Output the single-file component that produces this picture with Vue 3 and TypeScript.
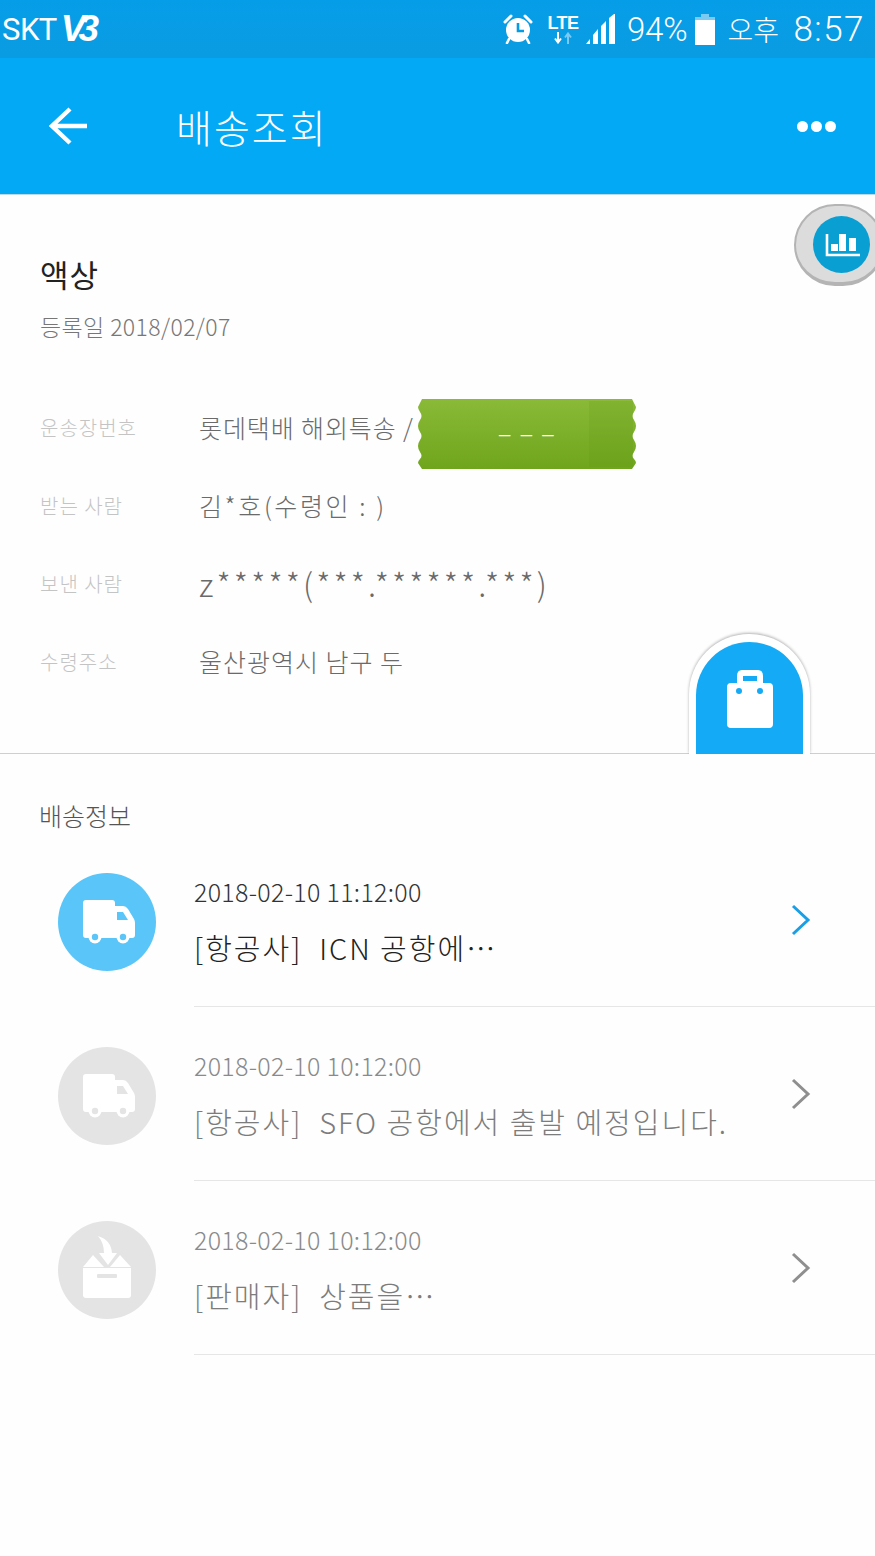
<script setup lang="ts">
interface Field {
  label: string
  value: string
  spacing: number
  size: number
}

interface Step {
  time: string
  text: string
  icon: 'truck' | 'box'
  active: boolean
}

const fields: Field[] = [
  { label: '운송장번호', value: '롯데택배 해외특송 /', spacing: 0.9, size: 25 },
  { label: '받는 사람', value: '김*호(수령인 : )', spacing: 2.6, size: 25 },
  { label: '보낸 사람', value: 'z*****(***.******.***)', spacing: 3.1, size: 32 },
  { label: '수령주소', value: '울산광역시 남구 두', spacing: 1, size: 25 },
]

const steps: Step[] = [
  { time: '2018-02-10 11:12:00', text: '[항공사]  ICN 공항에…', icon: 'truck', active: true },
  { time: '2018-02-10 10:12:00', text: '[항공사]  SFO 공항에서 출발 예정입니다.', icon: 'truck', active: false },
  { time: '2018-02-10 10:12:00', text: '[판매자]  상품을…', icon: 'box', active: false },
]
</script>

<template>
  <div class="page">
    <div class="status">
      <div class="carrier">
        <span>SKT</span>
        <span class="carrier-logo">V3</span>
      </div>
      <div class="status-right">
        <svg class="alarm" width="30" height="30" viewBox="0 0 30 30">
          <path d="M2 8 L8 2 M28 8 L22 2" stroke="#fff" stroke-width="3" stroke-linecap="round" />
          <circle cx="15" cy="16" r="12" fill="#fff" />
          <path d="M15 9 V17 H21" fill="none" stroke="#059ce6" stroke-width="2.6" />
          <path d="M6 25 L4 29 M24 25 L26 29" stroke="#fff" stroke-width="2.6" stroke-linecap="round" />
        </svg>
        <div class="lte">
          <span>LTE</span>
          <svg width="26" height="12" viewBox="0 0 26 12">
            <path d="M8 0 V9 M5 6.5 L8 10.5 L11 6.5" fill="none" stroke="#fff" stroke-width="2" />
            <path d="M18 12 V3 M15 5.5 L18 1.5 L21 5.5" fill="none" stroke="#7cc9f2" stroke-width="2" />
          </svg>
        </div>
        <svg class="signal" width="30" height="30" viewBox="0 0 30 30">
          <path d="M0 30 L4 25 V30 Z M7 30 V21 L12 15 V30 Z M15 30 V12 L20 7 V30 Z M23 30 V4 L28 0 H29 V30 Z" fill="#fff" />
        </svg>
        <span class="batt-text">94%</span>
        <svg class="battery" width="20" height="31" viewBox="0 0 20 31">
          <rect x="6" y="0" width="8" height="3" fill="#7cc9f2" />
          <rect x="0" y="3" width="20" height="3" fill="#7cc9f2" />
          <rect x="0" y="6" width="20" height="25" fill="#fff" />
        </svg>
        <span class="clock-ampm">오후</span>
        <span class="clock">8:57</span>
      </div>
    </div>

    <header class="bar">
      <svg class="back" width="40" height="40" viewBox="0 0 40 40">
        <path d="M38 20 H4 M21 3 L3 20 L21 37" fill="none" stroke="#fff" stroke-width="4.4" />
      </svg>
      <h1 class="bar-title">배송조회</h1>
      <div class="dots"><i></i><i></i><i></i></div>
    </header>

    <section class="info">
      <h2 class="product">액상</h2>
      <p class="reg">등록일 2018/02/07</p>
      <div class="fields">
        <div v-for="(f, i) in fields" :key="i" class="field">
          <span class="field-label">{{ f.label }}</span>
          <span class="field-value" :style="{ letterSpacing: f.spacing + 'px', fontSize: f.size + 'px' }">{{ f.value }}</span>
          <div v-if="i === 0" class="tag">
            <svg class="tag-bg" width="218" height="70" viewBox="0 0 218 70">
              <defs>
                <linearGradient id="tagFill" x1="0" y1="0" x2="0" y2="1">
                  <stop offset="0" stop-color="#8aba38" />
                  <stop offset="1" stop-color="#6fa51c" />
                </linearGradient>
              </defs>
              <path
                d="M4 0 H214 L218 8 Q218 10 216 13 Q213 17 216 21 Q218 24 218 27 Q218 30 216 33 Q213 37 216 41 Q218 44 218 47 Q218 50 216 53 Q213 57 216 60 Q218 62 218 64 L214 70 H4 L0 64 Q0 62 2 60 Q5 57 2 53 Q0 50 0 47 Q0 44 2 41 Q5 37 2 33 Q0 30 0 27 Q0 24 2 21 Q5 17 2 13 Q0 10 0 8 Z"
                fill="url(#tagFill)"
              />
              <rect x="171" y="2" width="44" height="66" fill="#5f9416" opacity="0.18" />
            </svg>
            <span class="tag-text">– – –</span>
          </div>
        </div>
      </div>
    </section>

    <section class="delivery">
      <h3 class="delivery-title">배송정보</h3>
      <div v-for="(s, i) in steps" :key="i" class="step" :class="{ on: s.active }">
        <div class="step-icon">
          <svg v-if="s.icon === 'truck'" width="98" height="98" viewBox="0 0 98 98">
            <path
              d="M28 27 H54 Q57 27 57 30 V33 H65 Q68 33 70 36 L76 46 Q77 48 77 50 V62 Q77 65 74 65 H28 Q25 65 25 62 V30 Q25 27 28 27 Z"
              fill="#fff"
            />
            <path d="M59 39 H65 L70 47 H59 Z" class="cut" />
            <circle cx="37" cy="64" r="6.5" fill="#fff" />
            <circle cx="37" cy="64" r="3.2" class="cut" />
            <circle cx="65" cy="64" r="6.5" fill="#fff" />
            <circle cx="65" cy="64" r="3.2" class="cut" />
          </svg>
          <svg v-else width="98" height="98" viewBox="0 0 98 98">
            <path d="M25 46 L35 34 L46 46 Z M73 46 L62 34 L52 46 Z" fill="#fff" />
            <path d="M25 47 H73 V74 Q73 77 70 77 H28 Q25 77 25 74 Z" fill="#fff" />
            <path d="M35 32 L63 32 L49 47 Z" class="cut" />
            <path d="M40 15 Q53 19 54 32 H59 L50 44 L41 32 H46 Q46 22 40 15 Z" fill="#fff" />
            <rect x="39" y="53" width="20" height="4" rx="1" class="cut" />
          </svg>
        </div>
        <div class="step-body">
          <div class="step-text">
            <div class="step-time">{{ s.time }}</div>
            <div class="step-msg">{{ s.text }}</div>
          </div>
          <svg class="chev" width="20" height="32" viewBox="0 0 20 32">
            <path d="M2 2 L17 16 L2 30" fill="none" stroke="currentColor" stroke-width="3" />
          </svg>
        </div>
      </div>
    </section>

    <!-- floating bits over the content -->
    <div class="pill">
      <div class="pill-dot">
        <svg width="36" height="30" viewBox="0 0 36 30">
          <path d="M3 4 V25 H36" fill="none" stroke="#fff" stroke-width="2.6" />
          <rect x="7" y="14" width="7" height="7" fill="#fff" />
          <rect x="15" y="4" width="7" height="17" fill="#fff" />
          <rect x="25" y="8" width="7" height="13" fill="#fff" />
        </svg>
      </div>
    </div>
    <div class="bag-tab">
      <div class="bag-inner">
        <svg width="48" height="60" viewBox="0 0 48 60">
          <path
            d="M16 0 H32 Q37 0 37 6 V13 H43 Q47 13 47 17 V54 Q47 58 43 58 H5 Q1 58 1 54 V17 Q1 13 5 13 H11 V6 Q11 0 16 0 Z"
            fill="#fff"
          />
          <rect x="17" y="6" width="14" height="5" fill="#14aaf5" />
          <circle cx="13" cy="21" r="3" fill="#14aaf5" />
          <circle cx="34" cy="21" r="3" fill="#14aaf5" />
        </svg>
      </div>
    </div>
  </div>
</template>

<style scoped>
.page {
  position: relative;
  width: 875px;
  min-height: 1556px;
  overflow: hidden;
  background: #fefefe;
  font-family: "Noto Sans CJK KR", "Noto Sans", sans-serif;
  font-weight: 300;
  color: #666;
}

.status {
  height: 58px;
  display: flex;
  align-items: center;
  justify-content: space-between;
  padding: 0 10px 0 2px;
  box-sizing: border-box;
  background: linear-gradient(#069de8, #0a9ce2);
  color: #fff;
}

.carrier {
  display: flex;
  align-items: center;
  font-family: Roboto, sans-serif;
  font-weight: 400;
  font-size: 31px;
  letter-spacing: -0.5px;
}

.carrier-logo {
  font-family: "Liberation Sans", sans-serif;
  font-weight: 700;
  font-style: italic;
  font-size: 37px;
  letter-spacing: -7px;
  margin-left: 4px;
}

.status-right {
  display: flex;
  align-items: center;
}

.lte {
  display: flex;
  flex-direction: column;
  align-items: center;
  margin-left: 14px;
  width: 32px;
}

.lte span {
  font-family: "Liberation Sans", sans-serif;
  font-weight: 700;
  font-size: 18px;
  line-height: 18px;
  letter-spacing: -0.5px;
}

.signal {
  margin-left: 7px;
}

.batt-text {
  margin-left: 11px;
  font-family: Roboto, sans-serif;
  font-weight: 300;
  font-size: 33px;
  letter-spacing: -0.2px;
}

.battery {
  margin-left: 8px;
}

.clock-ampm {
  margin-left: 12px;
  font-size: 28px;
  width: 54px;
}

.clock {
  margin-left: 12px;
  font-family: Roboto, sans-serif;
  font-weight: 300;
  font-size: 35px;
  letter-spacing: 1.5px;
}

.bar {
  height: 136px;
  display: flex;
  align-items: center;
  padding: 0 39px 0 49px;
  background: #04a9f5;
  border-bottom: 1px solid #bcd9e6;
}

.back {
  flex: none;
}

.bar-title {
  margin: 0 0 0 87px;
  flex: 1;
  font-size: 39px;
  font-weight: 300;
  color: #fff;
  letter-spacing: 2px;
}

.dots {
  display: flex;
  gap: 3px;
}

.dots i {
  width: 11px;
  height: 11px;
  border-radius: 50%;
  background: #fff;
}

.info {
  height: 559px;
  padding: 59px 0 0 40px;
  box-sizing: border-box;
  border-bottom: 1px solid #cfcfcf;
}

.product {
  margin: 0;
  font-size: 31px;
  line-height: 40px;
  font-weight: 400;
  color: #222;
  letter-spacing: 1px;
}

.reg {
  margin: 17px 0 0;
  font-size: 23px;
  line-height: 30px;
  letter-spacing: 0.4px;
  color: #777;
}

.fields {
  margin-top: 47px;
}

.field {
  height: 78px;
  display: flex;
  align-items: center;
}

.field-label {
  width: 159px;
  flex: none;
  font-size: 20px;
  letter-spacing: 1px;
  color: #c4c4c4;
}

.field-value {
  color: #6a6a6a;
  white-space: pre;
}

.tag {
  position: relative;
  flex: none;
  width: 218px;
  height: 70px;
  margin: 14px 0 0 4px;
  padding-bottom: 4px;
  box-sizing: border-box;
  display: flex;
  align-items: center;
  justify-content: center;
}

.tag-bg {
  position: absolute;
  left: 0;
  top: 0;
}

.tag-text {
  position: relative;
  font-size: 26px;
  line-height: 30px;
  letter-spacing: 1px;
  color: #fff;
}

.delivery-title {
  margin: 0;
  padding: 45px 0 2px 39px;
  font-size: 25px;
  line-height: 32px;
  font-weight: 300;
  color: #555;
}

.step {
  display: flex;
  padding-left: 58px;
  --tone: #e4e4e4;
}

.step.on {
  --tone: #5ac5f8;
}

.step-icon {
  flex: none;
  width: 98px;
  height: 98px;
  margin: 40px 38px 0 0;
  border-radius: 50%;
  background: var(--tone);
}

.step-icon svg {
  display: block;
}

.cut {
  fill: var(--tone);
}

.step-body {
  flex: 1;
  display: flex;
  height: 174px;
  box-sizing: border-box;
  border-bottom: 1px solid #e6e6e6;
}

.step-text {
  flex: 1;
  padding-top: 43px;
}

.step-time {
  font-size: 25px;
  line-height: 30px;
  letter-spacing: 0.3px;
  color: #8a8a8a;
}

.step-msg {
  margin-top: 23px;
  font-size: 29px;
  line-height: 36px;
  letter-spacing: 2px;
  color: #7c7c7c;
  white-space: pre;
}

.step.on .step-time {
  color: #333;
}

.step.on .step-msg {
  color: #222;
}

.chev {
  flex: none;
  margin: 71px 64px 0 0;
  color: #8f8f8f;
}

.step.on .chev {
  color: #1a9fe6;
}

.pill {
  position: absolute;
  left: 794px;
  top: 204px;
  width: 90px;
  height: 82px;
  box-sizing: border-box;
  border: 2px solid #b4b4b4;
  border-bottom-width: 4px;
  border-radius: 41px;
  background: #dcdcdc;
}

.pill-dot {
  position: absolute;
  left: 17px;
  top: 10px;
  width: 57px;
  height: 57px;
  border-radius: 50%;
  background: #0a9fd2;
  display: flex;
  align-items: center;
  justify-content: center;
}

.bag-tab {
  position: absolute;
  left: 689px;
  top: 634px;
  width: 121px;
  height: 120px;
  box-sizing: border-box;
  padding: 8px 7px 0;
  border-radius: 60px 60px 0 0;
  background: #fff;
  box-shadow: 0 -1px 3px rgba(0, 0, 0, 0.3);
  clip-path: inset(-6px -6px 0 -6px);
}

.bag-inner {
  height: 112px;
  padding-top: 28px;
  box-sizing: border-box;
  border-radius: 54px 54px 0 0;
  background: #14aaf5;
  display: flex;
  justify-content: center;
  align-items: flex-start;
}
</style>
